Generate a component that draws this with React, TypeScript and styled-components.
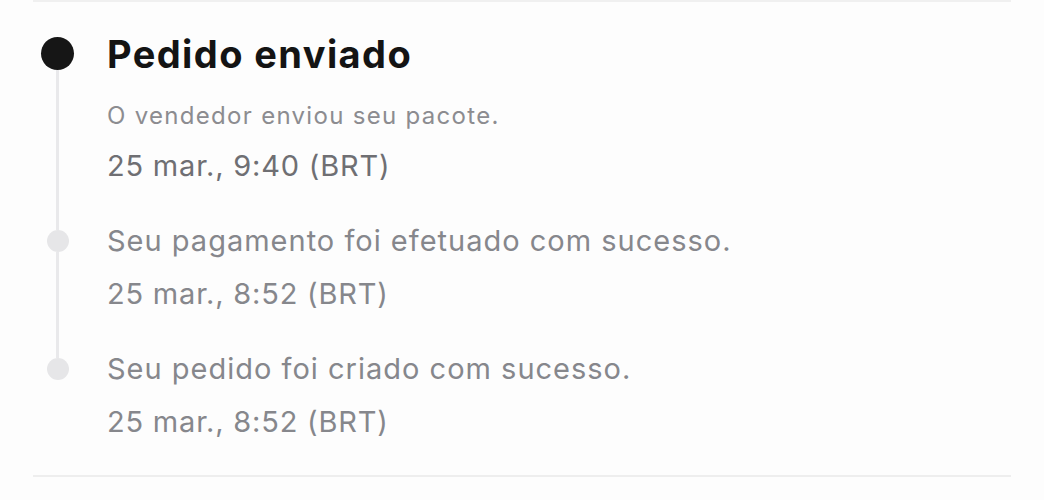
import React from "react";
import styled, { createGlobalStyle } from "styled-components";

const GlobalStyle = createGlobalStyle`
  html, body {
    margin: 0;
    padding: 0;
    background: #fdfdfd;
  }
  body {
    font-family: Inter, "Noto Sans", sans-serif;
  }
`;

type Step = {
  title: string;
  subtitle?: string;
  date: string;
  active?: boolean;
};

const steps: Step[] = [
  {
    title: "Pedido enviado",
    subtitle: "O vendedor enviou seu pacote.",
    date: "25 mar., 9:40 (BRT)",
    active: true,
  },
  { title: "Seu pagamento foi efetuado com sucesso.", date: "25 mar., 8:52 (BRT)" },
  { title: "Seu pedido foi criado com sucesso.", date: "25 mar., 8:52 (BRT)" },
];

export default function App() {
  return (
    <>
      <GlobalStyle />
      <Page>
        <Timeline>
          {steps.map((s, i) => (
            <Item key={i} $last={i === steps.length - 1}>
              <Marker>
                <Segment $hidden={i === 0} $h={s.active ? 1 : 9} />
                <Dot $active={s.active} />
                <Segment $hidden={i === steps.length - 1} $grow />
              </Marker>
              <Content>
                {s.active ? <Title>{s.title}</Title> : <Label>{s.title}</Label>}
                {s.subtitle && <Subtitle>{s.subtitle}</Subtitle>}
                <DateText $active={s.active}>{s.date}</DateText>
              </Content>
            </Item>
          ))}
        </Timeline>
      </Page>
    </>
  );
}

const Page = styled.div`
  width: 1044px;
  height: 500px;
  padding: 0 33px;
  box-sizing: border-box;
`;

const Timeline = styled.div`
  border-top: 2px solid #f0f0f0;
  border-bottom: 2px solid #eeeeee;
  padding: 34px 0 33px 8px;
`;

const Item = styled.div<{ $last?: boolean }>`
  display: flex;
  padding-bottom: ${(p) => (p.$last ? 0 : 35)}px;
`;

const Marker = styled.div`
  width: 33px;
  margin-right: 33px;
  display: flex;
  flex-direction: column;
  align-items: center;
  flex-shrink: 0;
`;

const Segment = styled.div<{ $hidden?: boolean; $h?: number; $grow?: boolean }>`
  width: 3px;
  height: ${(p) => (p.$grow ? "auto" : `${p.$h ?? 0}px`)};
  flex: ${(p) => (p.$grow ? "1 1 auto" : "0 0 auto")};
  background: ${(p) => (p.$hidden ? "transparent" : "#e9e9eb")};
  margin-bottom: ${(p) => (p.$grow ? "-35px" : "0")};
`;

const Dot = styled.div<{ $active?: boolean }>`
  width: ${(p) => (p.$active ? 33 : 22)}px;
  height: ${(p) => (p.$active ? 33 : 22)}px;
  border-radius: 50%;
  background: ${(p) => (p.$active ? "#161616" : "#e6e6e8")};
  flex-shrink: 0;
`;

const Content = styled.div`
  display: flex;
  flex-direction: column;
`;

const Title = styled.div`
  font-size: 38px;
  line-height: 36px;
  font-weight: 700;
  letter-spacing: 1.4px;
  color: #141414;
`;

const Subtitle = styled.div`
  margin-top: 28px;
  font-size: 24px;
  line-height: 32px;
  letter-spacing: 1.3px;
  color: #8c8c90;
`;

const Label = styled.div`
  font-size: 29px;
  line-height: 40px;
  letter-spacing: 1px;
  color: #86878c;
`;

const DateText = styled.div<{ $active?: boolean }>`
  margin-top: ${(p) => (p.$active ? 14 : 13)}px;
  font-size: 29px;
  line-height: 40px;
  letter-spacing: 0.8px;
  color: ${(p) => (p.$active ? "#6f6f73" : "#86878c")};
`;
